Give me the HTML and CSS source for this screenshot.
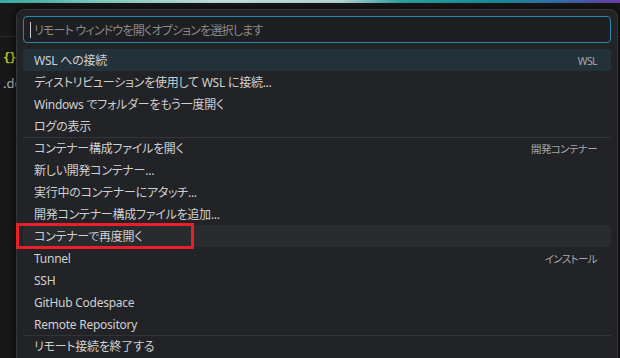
FILE: index.html
```html
<!DOCTYPE html>
<html lang="ja">
<head>
<meta charset="utf-8">
<link rel="stylesheet" href="styles.css">
</head>
<body>
<div class="topbar"></div>
<div class="editor">
  <div class="tabs"></div>
  <div class="code-line"><span class="braces">{}</span></div>
  <div class="code-line name">.dc</div>
</div>

<div class="quickpick">
  <div class="input">
    <span class="caret"></span>
    <span class="placeholder">リモート ウィンドウを開くオプションを選択します</span>
  </div>
  <ul class="list">
    <li class="row active"><span class="label">WSL への接続</span><span class="tag">WSL</span></li>
    <li class="row"><span class="label">ディストリビューションを使用して WSL に接続...</span></li>
    <li class="row"><span class="label">Windows でフォルダーをもう一度開く</span></li>
    <li class="row"><span class="label">ログの表示</span></li>
    <li class="row sep"><span class="label">コンテナー構成ファイルを開く</span><span class="tag">開発コンテナー</span></li>
    <li class="row"><span class="label">新しい開発コンテナー...</span></li>
    <li class="row"><span class="label">実行中のコンテナーにアタッチ...</span></li>
    <li class="row"><span class="label">開発コンテナー構成ファイルを追加...</span></li>
    <li class="row hover"><span class="label">コンテナーで再度開く</span><span class="highlight-box"></span></li>
    <li class="row"><span class="label">Tunnel</span><span class="tag">インストール</span></li>
    <li class="row"><span class="label">SSH</span></li>
    <li class="row"><span class="label">GitHub Codespace</span></li>
    <li class="row"><span class="label">Remote Repository</span></li>
    <li class="row sep"><span class="label">リモート接続を終了する</span></li>
  </ul>
</div>
</body>
</html>
```

FILE: styles.css
```css
html, body {
  margin: 0;
  padding: 0;
  width: 620px;
  height: 358px;
  overflow: hidden;
  background: #181818;
  font-family: "Noto Sans", "Noto Sans CJK JP", sans-serif;
  color: #cccccc;
}

.topbar {
  height: 3px;
  background: linear-gradient(90deg, #3aa9a0 0%, #7fd0c4 15%, #c9e6e2 35%, #b9dcd8 55%, #2fa3a6 65%, #1b8f9c 80%, #3a6fb0 90%, #6b3fa8 100%);
}

.editor {
  position: relative;
}

.tabs {
  height: 33px;
  border-bottom: 1px solid #2b2b2b;
}

.code-line {
  height: 22px;
  line-height: 22px;
  font-size: 13px;
  padding-left: 3px;
  margin-top: 9px;
}

.braces {
  color: #c8c83e;
  font-weight: bold;
  font-family: "DejaVu Sans Mono", monospace;
  font-size: 12px;
  letter-spacing: -1px;
}

.code-line.name {
  margin-top: 4px;
  color: #bdbdbd;
}

.quickpick {
  position: absolute;
  left: 16px;
  top: 9px;
  width: 602px;
  height: 360px;
  box-sizing: border-box;
  background: #222326;
  border: 1px solid #34363a;
  border-radius: 8px;
  padding: 6px 6px 0 6px;
  box-shadow: 0 0 8px 2px rgba(0, 0, 0, 0.55);
}

.input {
  height: 27px;
  box-sizing: border-box;
  border: 1px solid #2e83ad;
  border-radius: 4px;
  background: #1e1f22;
  display: flex;
  align-items: center;
  padding-left: 6px;
  gap: 3px;
}

.caret {
  width: 1px;
  height: 16px;
  background: #cccccc;
}

.placeholder {
  color: #8a8a8a;
  font-size: 12px;
  letter-spacing: -0.8px;
  font-feature-settings: "palt";
}

.list {
  list-style: none;
  margin: 6px 0 0 0;
  padding: 0;
}

.row {
  position: relative;
  height: 22px;
  line-height: 22px;
  box-sizing: border-box;
  padding: 1px 14px 0 11px;
  display: flex;
  justify-content: space-between;
  align-items: center;
  border-radius: 3px;
  font-size: 12px;
  letter-spacing: -0.25px;
  font-feature-settings: "palt";
  white-space: nowrap;
  color: #d0d0d0;
}

.row.sep {
  border-top: 1px solid #333438;
  border-radius: 0;
}

.row.active {
  background: #23313a;
}

.row.hover {
  background: #2a2b2e;
}

.tag {
  font-size: 10.5px;
  letter-spacing: -0.6px;
  color: #a6a6a6;
}

.highlight-box {
  position: absolute;
  left: -7px;
  top: -2px;
  width: 178px;
  height: 26px;
  box-sizing: border-box;
  border: 3px solid #e8202a;
}
```
